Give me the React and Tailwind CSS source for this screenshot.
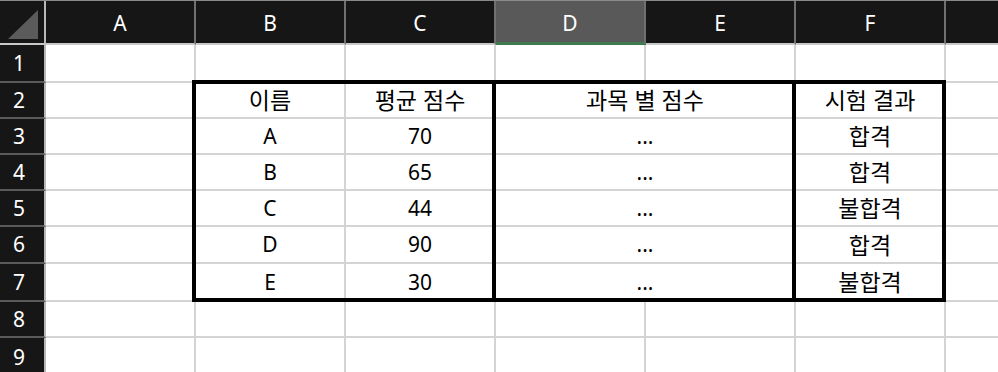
import React from 'react';

const COLS = ['A', 'B', 'C', 'D', 'E', 'F'];
const ROW_H = [38, 36, 36, 36, 36, 37, 38, 36, 40];

const DATA = [
  ['이름', '평균 점수', '과목 별 점수', '시험 결과'],
  ['A', '70', '...', '합격'],
  ['B', '65', '...', '합격'],
  ['C', '44', '...', '불합격'],
  ['D', '90', '...', '합격'],
  ['E', '30', '...', '불합격'],
];

const HEIGHTS = {
  38: 'h-[38px]',
  36: 'h-[36px]',
  37: 'h-[37px]',
  40: 'h-[40px]',
};

const isKorean = (s) => typeof s === 'string' && /[\uAC00-\uD7A3]/.test(s);

const Cell = ({ wide, children }) => (
  <div
    className={`${wide ? 'w-[300px]' : 'w-[150px]'} shrink-0 h-full border-r-2 border-b-2 border-[#d4d4d4] flex items-center justify-center text-black`}
  >
    {children && (
      <span className={isKorean(children) ? 'text-[23px] pt-[1px]' : ''}>{children}</span>
    )}
  </div>
);

const SheetRow = ({ n, h }) => {
  const data = n >= 2 && n <= 7 ? DATA[n - 2] : null;
  return (
    <div className={`flex ${HEIGHTS[h]}`}>
      <div className="w-[46px] shrink-0 h-full bg-[#161616] border-r-2 border-r-[#b8b8b8] border-b-2 border-b-[#5a5a5a] flex items-center justify-center pr-[6px] text-white text-[21px]">
        {n}
      </div>
      <Cell />
      {data ? (
        <>
          <Cell>{data[0]}</Cell>
          <Cell>{data[1]}</Cell>
          <Cell wide>{data[2]}</Cell>
          <Cell>{data[3]}</Cell>
        </>
      ) : (
        <>
          <Cell />
          <Cell />
          <Cell />
          <Cell />
          <Cell />
        </>
      )}
      <div className="flex-1 h-full border-b-2 border-[#d4d4d4]" />
    </div>
  );
};

export default function App() {
  return (
    <div
      className="relative w-[998px] h-[372px] overflow-hidden bg-white text-[21px] leading-none"
      style={{ fontFamily: '"Noto Sans", "Noto Sans CJK KR", sans-serif' }}
    >
      {/* column headers */}
      <div className="flex h-[45px] border-t border-[#8a8a8a] bg-[#161616]">
        <div className="w-[46px] shrink-0 h-[44px] border-r-2 border-r-[#b8b8b8] border-b-2 border-b-[#c8c8c8] flex items-end justify-end">
          <svg width="46" height="42" viewBox="0 0 46 42" className="shrink-0">
            <polygon points="10,38 40,9 40,38" fill="#5b5b5b" />
          </svg>
        </div>
        {COLS.map((c) => (
          <div
            key={c}
            className={`w-[150px] shrink-0 border-r-2 border-r-[#707070] flex items-center justify-center pt-[3px] text-white ${
              c === 'D'
                ? 'h-[44px] bg-[#595959] border-b-[3px] border-b-[#3e7a4d]'
                : 'h-[44px] border-b-2 border-b-[#c8c8c8]'
            }`}
          >
            {c}
          </div>
        ))}
        <div className="flex-1 h-[44px] border-b-2 border-b-[#c8c8c8]" />
      </div>

      {ROW_H.map((h, i) => (
        <SheetRow key={i} n={i + 1} h={h} />
      ))}

      {/* thick outline borders over the table */}
      <div className="absolute left-[192px] top-[80px] w-[304px] h-[222px] border-4 border-black pointer-events-none" />
      <div className="absolute left-[492px] top-[80px] w-[304px] h-[222px] border-4 border-black pointer-events-none" />
      <div className="absolute left-[792px] top-[80px] w-[154px] h-[222px] border-4 border-black pointer-events-none" />
    </div>
  );
}
